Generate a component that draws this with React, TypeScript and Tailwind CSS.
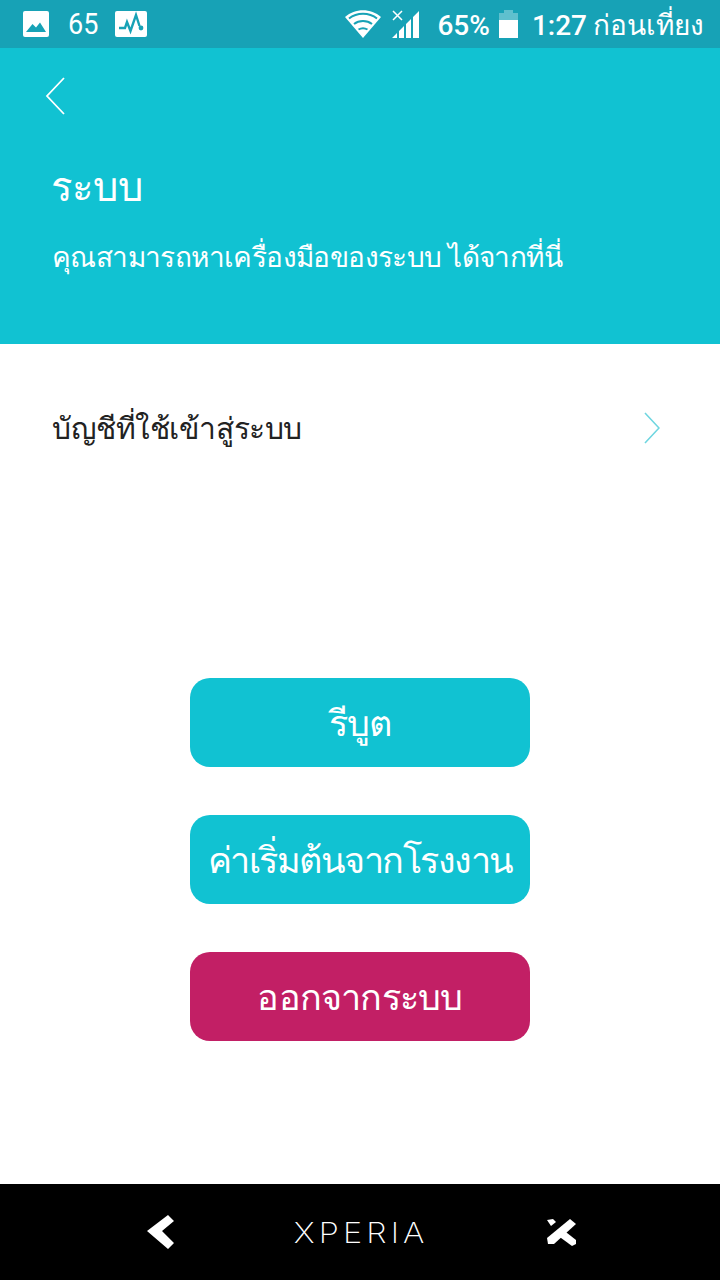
export default function App() {
  const thai = { fontFamily: '"Noto Sans", Roboto, sans-serif' };
  return (
    <div className="w-[720px] h-[1280px] flex flex-col bg-white overflow-hidden font-['Roboto','Noto_Sans',sans-serif]">
      {/* status bar */}
      <div className="h-[48px] bg-[#17a2b6] flex items-center text-white shrink-0">
        <svg className="ml-[23px] w-[26px] h-[26px]" viewBox="0 0 26 26">
          <rect width="26" height="26" rx="2" fill="#fff" />
          <path d="M3 21 L9.5 13 L13 16.5 L17 11.5 L23 21 Z" fill="#17a2b6" />
        </svg>
        <span className="ml-[19px] text-[30px] leading-none font-normal w-[30px] scale-x-90 origin-left">65</span>
        <svg className="ml-[17px] w-[32px] h-[26px]" viewBox="0 0 32 26">
          <rect width="32" height="26" rx="2" fill="#fff" />
          <path d="M4 17 H10 L12 11 L15.5 20 L21 4 L24.5 15" fill="none" stroke="#17a2b6" strokeWidth="2.4" />
          <circle cx="26" cy="17" r="2.4" fill="#17a2b6" />
        </svg>
        <svg className="ml-auto w-[36px] h-[28px]" viewBox="0 0 36 28">
          <path d="M0 7 C10 -2 26 -2 36 7 L18 28 Z" fill="#fff" />
          <path d="M4 8.5 C12 2 24 2 32 8.5" fill="none" stroke="#17a2b6" strokeWidth="2" />
          <path d="M9 14 C14 10 22 10 27 14" fill="none" stroke="#17a2b6" strokeWidth="2" />
          <path d="M13.5 19.5 C16 18 20 18 22.5 19.5" fill="none" stroke="#17a2b6" strokeWidth="2" />
        </svg>
        <svg className="ml-[11px] w-[28px] h-[28px]" viewBox="0 0 28 28">
          <path d="M1 1 L10 10 M10 1 L1 10" stroke="#fff" strokeWidth="1.5" />
          <path d="M0 28 L5 23 V28 Z M7 28 V21 L12 16 V28 Z M14 28 V14 L19 9 V28 Z M21 28 V7 L27 1 V28 Z" fill="#fff" />
        </svg>
        <span className="ml-[17px] mt-[4px] text-[28px] leading-none font-medium">65%</span>
        <div className="ml-[9px] w-[19px] h-[28px] flex flex-col items-center">
          <div className="w-[9px] h-[3px] bg-[#5fc0ce]" />
          <div className="w-[19px] h-[7px] bg-[#5fc0ce]" />
          <div className="w-[19px] h-[18px] bg-white" />
        </div>
        <span className="ml-[14px] mt-[4px] text-[28px] leading-none font-medium">1:27</span>
        <span className="ml-[6px] mr-[16px] text-[28px] leading-none" style={thai}>ก่อนเที่ยง</span>
      </div>

      {/* header */}
      <div className="h-[296px] bg-[#11c2d2] text-white shrink-0 flex flex-col px-[52px]" style={thai}>
        <svg className="mt-[29px] -ml-[7px] w-[20px] h-[38px]" viewBox="0 0 20 38">
          <path d="M19 1 L2 19 L19 37" fill="none" stroke="#fff" strokeWidth="1.8" />
        </svg>
        <h1 className="mt-[47px] -ml-[1px] text-[40px] leading-[48px] font-normal">ระบบ</h1>
        <p className="mt-[26px] text-[28px] leading-[40px] tracking-[-0.6px] whitespace-nowrap">คุณสามารถหาเครื่องมือของระบบ ได้จากที่นี่</p>
      </div>

      {/* body */}
      <div className="flex-1 flex flex-col" style={thai}>
        <div className="mt-[63px] h-[42px] pl-[52px] pr-[60px] flex items-center justify-between">
          <span className="text-[30px] leading-[42px] text-[#222222] tracking-[-0.45px]">บัญชีที่ใช้เข้าสู่ระบบ</span>
          <svg className="w-[16px] h-[32px]" viewBox="0 0 16 32">
            <path d="M1 1 L15 16 L1 31" fill="none" stroke="#6fd6e0" strokeWidth="1.6" />
          </svg>
        </div>
        <div className="mt-[229px] flex flex-col items-center gap-[48px]">
          <button className="w-[340px] h-[89px] rounded-[20px] bg-[#11c2d2] text-white text-[36px] leading-none tracking-[-0.8px]">รีบูต</button>
          <button className="w-[340px] h-[89px] rounded-[20px] bg-[#11c2d2] text-white text-[36px] leading-none whitespace-nowrap tracking-[-1.5px]">ค่าเริ่มต้นจากโรงงาน</button>
          <button className="w-[340px] h-[89px] rounded-[20px] bg-[#c21f65] text-white text-[36px] leading-none tracking-[-0.8px]">ออกจากระบบ</button>
        </div>
      </div>

      {/* nav bar */}
      <div className="h-[96px] bg-black text-white flex items-center justify-between shrink-0 pl-[146px] pr-[143px]">
        <svg className="w-[30px] h-[36px]" viewBox="0 0 30 36">
          <path d="M1 17 L22 1 L28 7 L16 17 L28 29 L22 35 Z" fill="#fff" />
        </svg>
        <span className="text-[29px] leading-none tracking-[3.7px] scale-x-[1.12] font-extralight font-['Inter',sans-serif]">XPERIA</span>
        <svg className="w-[31px] h-[28px]" viewBox="0 0 31 28">
          <path d="M1 2 L7 1 L10 4 L5 8 Z" fill="#fff" />
          <path d="M24 1 L30 6 L8 26 L2 26 L1 20 Z" fill="#fff" />
          <path d="M16 11 L30 22 L30 26 L26 28 L11 17 Z" fill="#fff" />
        </svg>
      </div>
    </div>
  );
}
